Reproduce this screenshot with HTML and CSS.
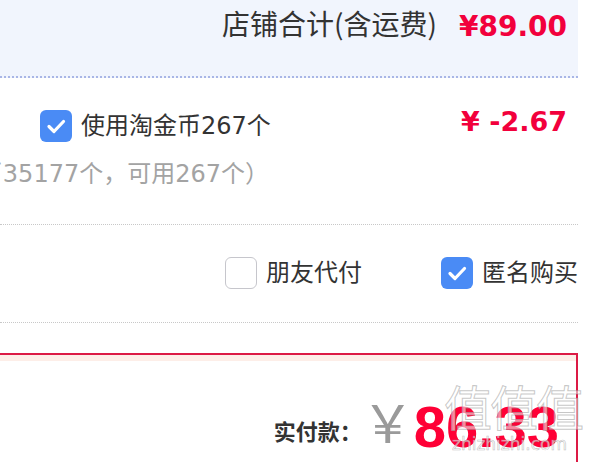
FILE: index.html
```html
<!DOCTYPE html>
<html lang="zh-CN">
<head>
    <meta charset="UTF-8">
    <title>确认订单</title>
    <link rel="stylesheet" href="styles.css">
</head>
<body>
    <div class="order">
        <div class="shop-total">
            <span class="shop-label">店铺合计(含运费)</span>
            <span class="shop-price">¥89.00</span>
        </div>

        <div class="coin">
            <div class="coin-row">
                <label class="check">
                    <span class="box checked">
                        <svg viewBox="0 0 32 32" width="32" height="32"><path d="M9 16.5l5 5 9.5-10" fill="none" stroke="#fff" stroke-width="3.2" stroke-linecap="round" stroke-linejoin="round"/></svg>
                    </span>
                    <span class="check-text">使用淘金币267个</span>
                </label>
                <span class="coin-price">¥ -2.67</span>
            </div>
            <div class="coin-note">
                <span>（当前淘金币35177个，可用267个）</span>
            </div>
        </div>

        <div class="options">
            <label class="check option">
                <span class="box"></span>
                <span class="check-text">朋友代付</span>
            </label>
            <label class="check option">
                <span class="box checked">
                    <svg viewBox="0 0 32 32" width="32" height="32"><path d="M9 16.5l5 5 9.5-10" fill="none" stroke="#fff" stroke-width="3.2" stroke-linecap="round" stroke-linejoin="round"/></svg>
                </span>
                <span class="check-text">匿名购买</span>
            </label>
        </div>

        <div class="pay">
            <span class="pay-label">实付款：</span>
            <span class="pay-yen">￥</span>
            <span class="pay-price">86.33</span>
        </div>
    </div>

    <div class="watermark">
        <span class="wm-logo">值值值</span>
        <span class="wm-site">zhizhizhi.com</span>
    </div>
</body>
</html>
```

FILE: styles.css
```css
body {
    margin: 0;
    background: #fff;
    font-family: "DejaVu Sans", "Noto Sans CJK SC", sans-serif;
    color: #333;
    overflow: hidden;
}

.order {
    width: 578px;
}

/* shop total */
.shop-total {
    height: 78px;
    box-sizing: border-box;
    padding: 8px 11px 0 0;
    background: #f1f5fd;
    border-bottom: 2px dotted #a9b6e6;
    display: flex;
    justify-content: flex-end;
    align-items: flex-start;
}

.shop-label {
    margin-top: -4px;
    font-family: "Noto Sans CJK SC", sans-serif;
    font-size: 28px;
    line-height: 38px;
    color: #333;
}

.shop-price {
    margin-left: 22px;
    font-family: "DejaVu Sans", sans-serif;
    font-weight: bold;
    font-size: 28px;
    line-height: 38px;
    color: #f2003c;
}

/* coins */
.coin {
    padding: 32px 11px 34px 0;
    border-bottom: 1px dotted #c8c8c8;
}

.coin-row {
    display: flex;
    justify-content: space-between;
    align-items: flex-start;
}

.coin-row .check {
    margin-left: 40px;
}

.coin-price {
    font-family: "DejaVu Sans", sans-serif;
    font-weight: bold;
    font-size: 27px;
    line-height: 24px;
    color: #f2003c;
}

.coin-note {
    width: 269px;
    margin-top: 16px;
    display: flex;
    justify-content: flex-end;
    white-space: nowrap;
    font-size: 24px;
    line-height: 32px;
    color: #a3a3a3;
}

/* checkbox */
.check {
    display: flex;
    align-items: center;
}

.box {
    width: 32px;
    height: 32px;
    box-sizing: border-box;
    border: 1.5px solid #c6c6cc;
    border-radius: 6px;
    background: #fff;
    display: block;
}

.box.checked {
    border: none;
    background: #4a8bf5;
}

.box svg {
    display: block;
}

.check-text {
    margin-left: 9px;
    font-size: 24px;
    line-height: 32px;
    color: #333;
}

/* options */
.options {
    padding: 32px 0 33px;
    border-bottom: 1px dotted #c8c8c8;
    display: flex;
    justify-content: flex-end;
}

.option + .option {
    margin-left: 79px;
}

/* pay */
.pay {
    margin: 30px 0 0 -10px;
    padding: 40px 17px 60px 0;
    border: 2px solid #dc1a45;
    box-shadow: inset 0 6px 0 #fdeee8;
    display: flex;
    justify-content: flex-end;
    align-items: flex-end;
}

.pay-label {
    margin-bottom: 15px;
    font-family: "Noto Sans CJK SC", sans-serif;
    font-weight: bold;
    font-size: 22px;
    line-height: 22px;
    color: #333;
}

.pay-yen {
    margin-bottom: 9px;
    font-family: "Noto Sans CJK SC", sans-serif;
    font-size: 52px;
    line-height: 52px;
    color: #9a9a9a;
}

.pay-price {
    font-family: "Liberation Sans", Arial, sans-serif;
    font-weight: bold;
    font-size: 58px;
    line-height: 58px;
    color: #ff0036;
}

/* watermark */
.watermark {
    position: absolute;
    left: 444px;
    top: 374px;
    display: flex;
    flex-direction: column;
    align-items: flex-start;
    pointer-events: none;
}

.wm-logo {
    font-family: "Noto Sans CJK SC", sans-serif;
    font-size: 48px;
    line-height: 62px;
    letter-spacing: -2px;
    color: rgba(255, 255, 255, 0.55);
    -webkit-text-stroke: 1px rgba(150, 150, 150, 0.55);
}

.wm-site {
    margin: -2px 0 0 8px;
    font-family: "DejaVu Sans", sans-serif;
    font-size: 17px;
    color: rgba(255, 255, 255, 0.6);
    -webkit-text-stroke: 0.6px rgba(150, 150, 150, 0.6);
}
```
